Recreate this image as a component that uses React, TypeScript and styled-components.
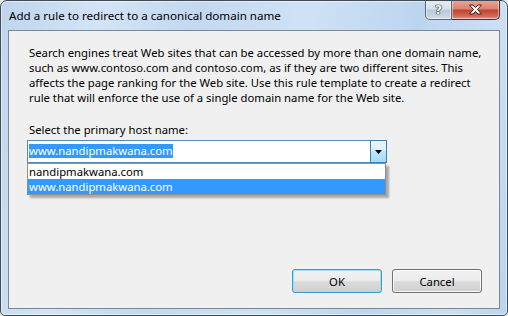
import styled, { createGlobalStyle } from "styled-components";

const GlobalStyle = createGlobalStyle`
  html, body {
    margin: 0;
    padding: 0;
    background: #e6e9ec;
  }
`;

const uiFont = `"Noto Sans", "Open Sans", "DejaVu Sans", sans-serif`;

const Window = styled.div`
  box-sizing: border-box;
  width: 508px;
  height: 316px;
  display: flex;
  flex-direction: column;
  border: 1px solid #404b56;
  border-radius: 7px 7px 5px 5px;
  background: linear-gradient(
    100deg,
    #bed5ee 0%,
    #d3e4f6 18%,
    #c2d9f1 35%,
    #cfe2f5 55%,
    #bcd5ef 75%,
    #cce0f4 90%,
    #bbd3ed 100%
  );
  box-shadow: inset 0 0 0 1px rgba(255, 255, 255, 0.55);
  overflow: hidden;
  font-family: ${uiFont};
  font-size: 11.3px;
  color: #000;
`;

const TitleBar = styled.div`
  height: 29px;
  display: flex;
  justify-content: space-between;
  align-items: flex-start;
  padding: 0 7px 0 8px;
`;

const Title = styled.div`
  padding-top: 7px;
  font-size: 11.6px;
  line-height: 15px;
  white-space: nowrap;
`;

const Controls = styled.div`
  display: flex;
  margin-top: -1px;
`;

const CaptionButton = styled.div<{ $kind: "help" | "close" }>`
  box-sizing: border-box;
  height: 20px;
  width: ${({ $kind }) => ($kind === "close" ? "48px" : "27px")};
  display: flex;
  align-items: center;
  justify-content: center;
  border: 1px solid ${({ $kind }) => ($kind === "close" ? "#5e2a24" : "#5b6877")};
  border-top: none;
  ${({ $kind }) => ($kind === "close" ? "border-left: none;" : "")}
  border-radius: ${({ $kind }) => ($kind === "close" ? "0 0 5px 0" : "0 0 0 5px")};
  background: ${({ $kind }) =>
    $kind === "close"
      ? "linear-gradient(180deg, #e9a99c 0%, #d98374 45%, #c14532 55%, #cf6a55 85%, #e39a86 100%)"
      : "linear-gradient(180deg, #e6edf4 0%, #d7e1eb 45%, #bccad8 55%, #c7d4e2 85%, #d8e3ee 100%)"};
  box-shadow: inset 0 0 0 1px rgba(255, 255, 255, 0.45);
`;

const HelpMark = styled.span`
  font-family: "DejaVu Sans", sans-serif;
  font-weight: bold;
  font-size: 13px;
  line-height: 1;
  color: #f4f6f8;
  text-shadow: 0 0 1px #1f2a36, 0 0 1px #1f2a36, 0 0 1px #1f2a36;
`;

const Client = styled.div`
  flex: 1;
  margin: 0 7px 6px 7px;
  border: 1px solid #7a8794;
  background: #f0f0f0;
  display: flex;
  flex-direction: column;
  padding: 14px 17px 15px 20px;
`;

const Paragraph = styled.div`
  line-height: 15px;
  white-space: nowrap;
`;

const Label = styled.div`
  margin-top: 17px;
  line-height: 15px;
`;

const ComboWrap = styled.div`
  position: relative;
  margin: 3px 0 0 -2px;
  width: 360px;
`;

const Combo = styled.div`
  display: flex;
  height: 23px;
`;

const ComboField = styled.div`
  box-sizing: border-box;
  flex: 1;
  border: 1px solid #5b8ab6;
  border-right: none;
  background: #fff;
  padding: 2px 0 0 1px;
`;

const Selected = styled.span`
  display: inline-block;
  line-height: 14px;
  background: #3399ff;
  color: #fff;
`;

const DropButton = styled.div`
  box-sizing: border-box;
  width: 17px;
  border: 1px solid #3c7fb1;
  background: linear-gradient(180deg, #eaf6fd 0%, #d9f0fc 45%, #bee6fd 50%, #a7d9f5 100%);
  display: flex;
  align-items: center;
  justify-content: center;
`;

const DropList = styled.div`
  position: absolute;
  top: 23px;
  left: 0;
  right: 1px;
  border: 1px solid #8e8f8f;
  background: #fff;
  box-shadow: 3px 3px 2px rgba(0, 0, 0, 0.3);
`;

const Item = styled.div<{ $selected?: boolean }>`
  height: 15px;
  line-height: 15px;
  padding-left: 1px;
  background: ${({ $selected }) => ($selected ? "#3399ff" : "#fff")};
  color: ${({ $selected }) => ($selected ? "#fff" : "#000")};
`;

const Spacer = styled.div`
  flex: 1;
`;

const ButtonRow = styled.div`
  display: flex;
  justify-content: flex-end;
  gap: 10px;
`;

const Button = styled.div<{ $default?: boolean }>`
  box-sizing: border-box;
  width: 90px;
  height: 24px;
  display: flex;
  align-items: center;
  justify-content: center;
  border: 1px solid ${({ $default }) => ($default ? "#3c9bd0" : "#707070")};
  border-radius: 3px;
  background: linear-gradient(180deg, #f2f2f2 0%, #ebebeb 49%, #dddddd 51%, #cfcfcf 100%);
  box-shadow: inset 0 0 0 1px ${({ $default }) => ($default ? "#9fdcf6" : "#fbfbfb")};
  color: #000;
`;

export default function App() {
  return (
    <>
      <GlobalStyle />
      <Window>
        <TitleBar>
          <Title>Add a rule to redirect to a canonical domain name</Title>
          <Controls>
            <CaptionButton $kind="help">
              <HelpMark>?</HelpMark>
            </CaptionButton>
            <CaptionButton $kind="close">
              <svg width="15" height="11" viewBox="0 0 15 11">
                <path
                  d="M1.5 1 H5 L7.5 3.5 L10 1 H13.5 L9.5 5.5 L13.5 10 H10 L7.5 7.5 L5 10 H1.5 L5.5 5.5 Z"
                  fill="#ffffff"
                  stroke="#4a1a14"
                  strokeWidth="1"
                  strokeLinejoin="round"
                />
              </svg>
            </CaptionButton>
          </Controls>
        </TitleBar>
        <Client>
          <Paragraph>
            Search engines treat Web sites that can be accessed by more than one domain name,
            <br />
            such as www.contoso.com and contoso.com, as if they are two different sites. This
            <br />
            affects the page ranking for the Web site. Use this rule template to create a redirect
            <br />
            rule that will enforce the use of a single domain name for the Web site.
          </Paragraph>
          <Label>Select the primary host name:</Label>
          <ComboWrap>
            <Combo>
              <ComboField>
                <Selected>www.nandipmakwana.com</Selected>
              </ComboField>
              <DropButton>
                <svg width="7" height="4" viewBox="0 0 7 4">
                  <path d="M0 0 H7 L3.5 4 Z" fill="#000" />
                </svg>
              </DropButton>
            </Combo>
            <DropList>
              <Item>nandipmakwana.com</Item>
              <Item $selected>www.nandipmakwana.com</Item>
            </DropList>
          </ComboWrap>
          <Spacer />
          <ButtonRow>
            <Button $default>OK</Button>
            <Button>Cancel</Button>
          </ButtonRow>
        </Client>
      </Window>
    </>
  );
}
